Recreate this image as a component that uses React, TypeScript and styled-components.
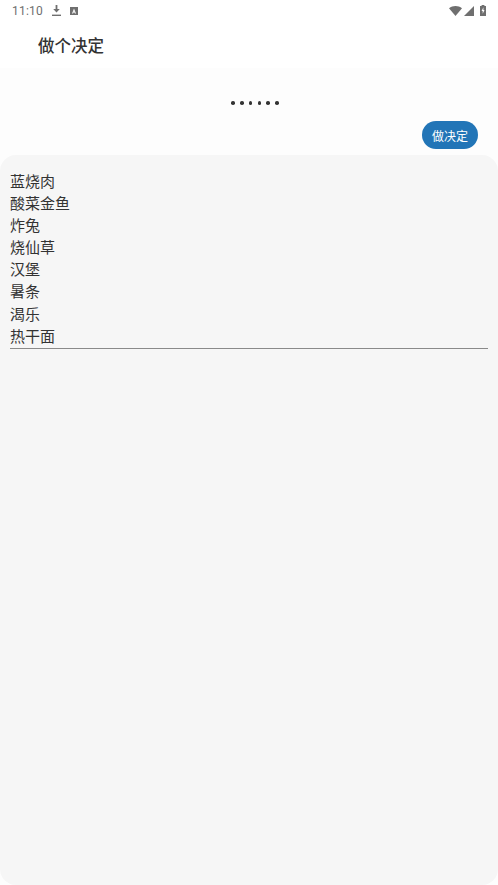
import * as React from 'react';
import styled, { createGlobalStyle } from 'styled-components';

const FOODS = ['蓝烧肉', '酸菜金鱼', '炸兔', '烧仙草', '汉堡', '暑条', '渴乐', '热干面'];

const GlobalStyle = createGlobalStyle`
	html, body {
		margin: 0;
		padding: 0;
		background: #fff;
	}
	body {
		font-family: Roboto, "Noto Sans CJK SC", sans-serif;
	}
`;

const Screen = styled.div`
	width: 498px;
	height: 885px;
	display: flex;
	flex-direction: column;
	background: #fff;
	overflow: hidden;
`;

const StatusBar = styled.div`
	height: 22px;
	display: flex;
	align-items: center;
	justify-content: space-between;
	padding: 0 12px 1px 12px;
	box-sizing: border-box;
	color: #6f6f6f;
`;

const StatusGroup = styled.div`
	display: flex;
	align-items: center;
`;

const Clock = styled.span`
	font-size: 12px;
	letter-spacing: 0.2px;
	margin-right: 9px;
	padding-top: 1px;
`;

const StatusIcon = styled.svg<{ $gap?: number }>`
	display: block;
	fill: #6f6f6f;
	margin-left: ${(props) => props.$gap ?? 0}px;
`;

const AppBar = styled.div`
	height: 46px;
	display: flex;
	align-items: center;
	padding-left: 38px;
	box-sizing: border-box;
`;

const Title = styled.h1`
	margin: 0;
	font-size: 16.5px;
	font-weight: 500;
	color: #333;
`;

const Content = styled.div`
	flex: 1;
	display: flex;
	flex-direction: column;
	background: #fdfdfd;
`;

const Result = styled.div`
	height: 53px;
	box-sizing: border-box;
	display: flex;
	align-items: center;
	justify-content: center;
	gap: 5.2px;
	padding: 17px 0 0 12px;
`;

const Dot = styled.span`
	width: 3.6px;
	height: 3.6px;
	border-radius: 50%;
	background: #333;
`;

const Actions = styled.div`
	display: flex;
	justify-content: flex-end;
	padding-right: 20px;
	margin-bottom: 6px;
`;

const DecideButton = styled.button`
	width: 56px;
	height: 28px;
	border: none;
	border-radius: 14px;
	padding: 0;
	background: #2275b7;
	color: #fff;
	font: inherit;
	font-size: 12px;
`;

const Sheet = styled.div`
	flex: 1;
	background: #f6f6f6;
	border-radius: 16px;
	padding: 16px 10px 0;
`;

const FoodList = styled.div`
	border-bottom: 1px solid #8a8a8a;
`;

const Food = styled.div`
	font-size: 15px;
	line-height: 22.1px;
	color: #333;
`;

const DownloadIcon = () => (
	<StatusIcon width="9" height="11" viewBox="0 0 9 11">
		<path d="M3.6 0h1.8v4h2.4L4.5 7.6 1.2 4h2.4z" />
		<path d="M0 9.6h9V11H0z" />
	</StatusIcon>
);

const TranslateIcon = () => (
	<StatusIcon $gap={9} width="8" height="8" viewBox="0 0 8 8">
		<path fillRule="evenodd" d="M0 0h8v8H0zM4 1.4 2 6.6h1.1l.4-1h1l.4 1H6zM4 3.4l.3 1.2h-.6z" />
	</StatusIcon>
);

const WifiIcon = () => (
	<StatusIcon width="13" height="10" viewBox="0 0 13 10">
		<path d="M0 2.2C3.6-.7 9.4-.7 13 2.2L6.5 10z" />
	</StatusIcon>
);

const SignalIcon = () => (
	<StatusIcon $gap={2} width="10" height="10" viewBox="0 0 10 10">
		<path d="M10 0v10H0z" />
	</StatusIcon>
);

const BatteryIcon = () => (
	<StatusIcon $gap={6} width="6" height="11" viewBox="0 0 6 11">
		<path d="M1.6 0h2.8v1H6v10H0V1h1.6z" />
		<path fill="#fff" d="M3.4 2.2 1.6 6h1.1v2.8L4.5 5H3.4z" />
	</StatusIcon>
);

export default function App() {
	return (
		<Screen>
			<GlobalStyle />
			<StatusBar>
				<StatusGroup>
					<Clock>11:10</Clock>
					<DownloadIcon />
					<TranslateIcon />
				</StatusGroup>
				<StatusGroup>
					<WifiIcon />
					<SignalIcon />
					<BatteryIcon />
				</StatusGroup>
			</StatusBar>
			<AppBar>
				<Title>做个决定</Title>
			</AppBar>
			<Content>
				<Result>
					{Array.from({ length: 6 }, (_, index) => (
						<Dot key={index} />
					))}
				</Result>
				<Actions>
					<DecideButton>做决定</DecideButton>
				</Actions>
				<Sheet>
					<FoodList>
						{FOODS.map((food) => (
							<Food key={food}>{food}</Food>
						))}
					</FoodList>
				</Sheet>
			</Content>
		</Screen>
	);
}
